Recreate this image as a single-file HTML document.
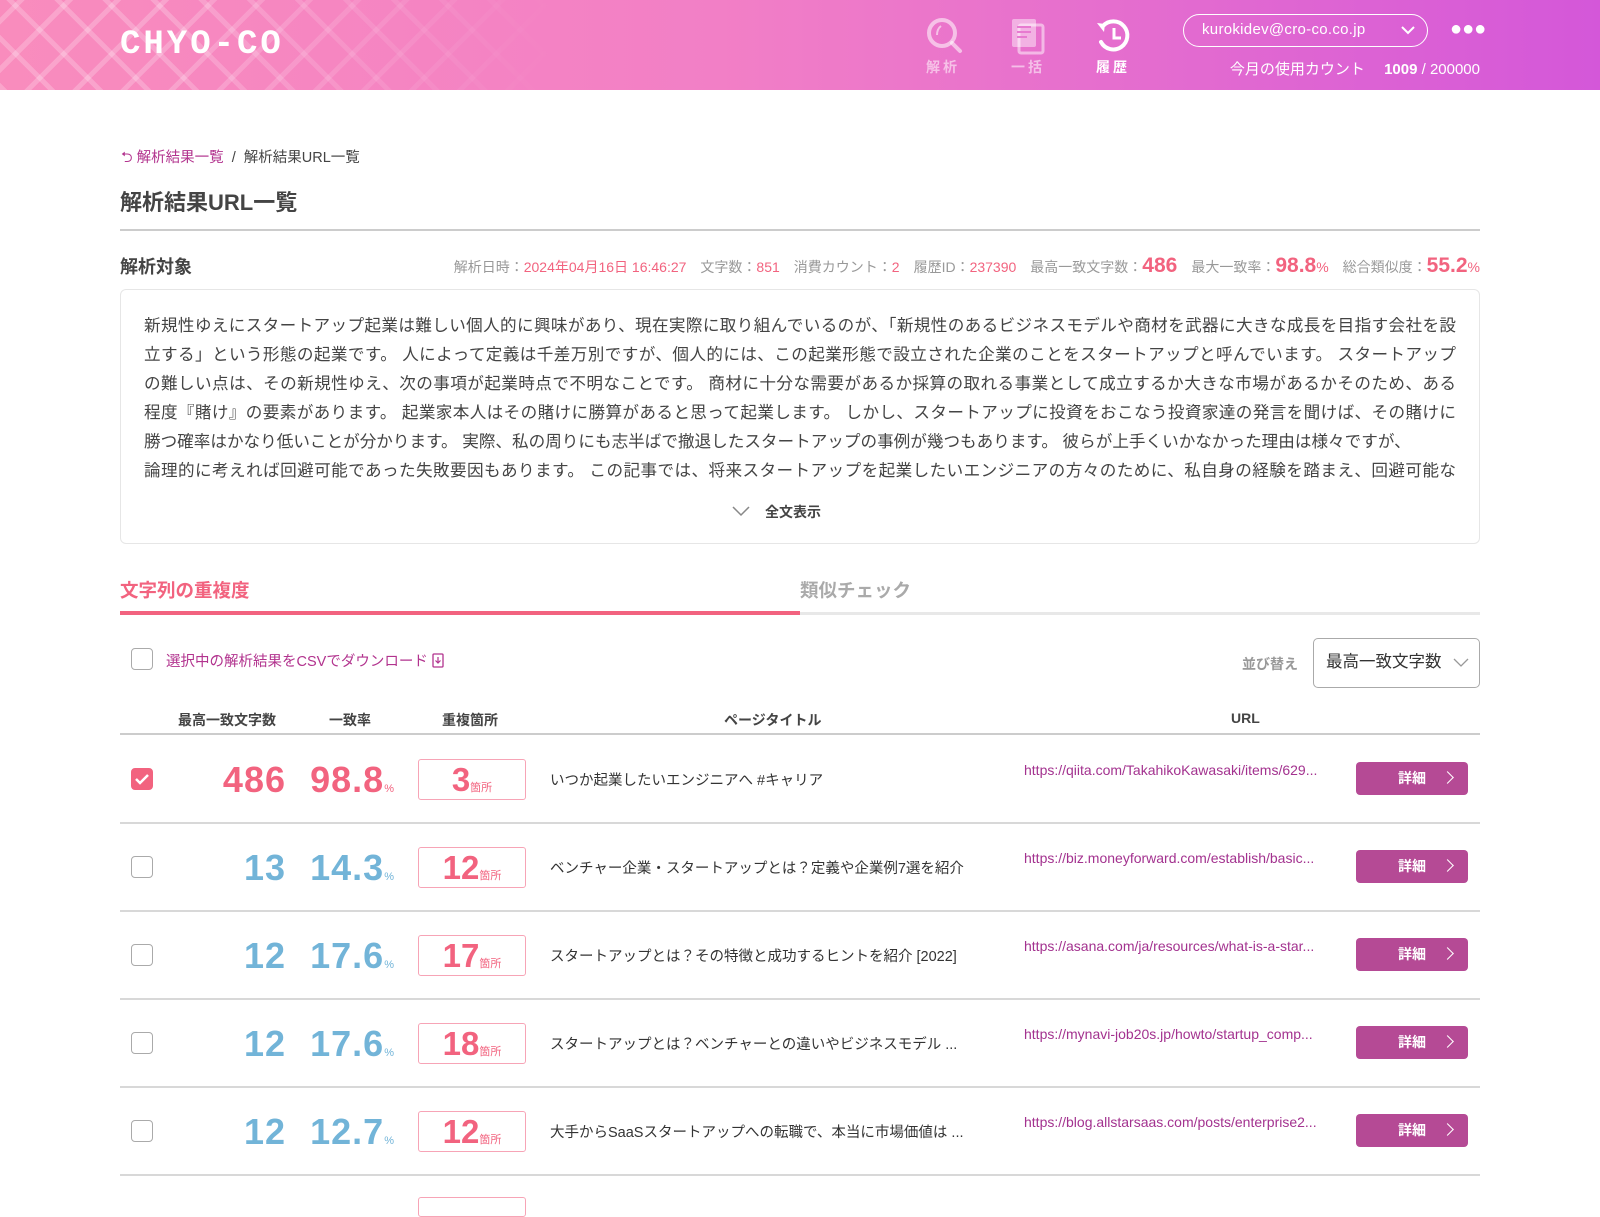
<!DOCTYPE html>
<html><head><meta charset="utf-8"><style>
*{box-sizing:border-box;margin:0;padding:0}
body{width:1600px;height:1200px;overflow:hidden;background:#fff;font-family:"Liberation Sans","Noto Sans CJK JP",sans-serif;color:#333;position:relative}
.abs{position:absolute}
.hdr{left:0;top:0;width:1600px;height:90px;background:linear-gradient(90deg,#f98cbd 0%,#f27fc6 45%,#e26ad0 75%,#d457d9 100%)}
.pat{left:0;top:0;width:560px;height:90px;background:repeating-linear-gradient(45deg,rgba(255,255,255,.22) 0 5px,transparent 5px 34px),repeating-linear-gradient(-45deg,rgba(255,255,255,.22) 0 5px,transparent 5px 34px);-webkit-mask-image:linear-gradient(90deg,#000 30%,transparent 100%);mask-image:linear-gradient(90deg,#000 30%,transparent 100%)}
.logo{left:120px;top:28px;color:#fff;font-family:"Liberation Mono",monospace;font-size:34px;letter-spacing:3px;line-height:34px;font-weight:bold}
.nav{color:rgba(255,255,255,.55);font-size:14px;font-weight:bold;letter-spacing:3px;text-align:center;width:60px}
.pill{left:1183px;top:14px;width:245px;height:33px;border:1.5px solid #fff;border-radius:17px;color:#fff;font-size:15px;line-height:30px;padding-left:18px;letter-spacing:.3px}
.num{font-weight:bold;text-align:right;letter-spacing:1px}
.pink{color:#f2637f}.blue{color:#72b4d8}
.box{border:1.5px solid #f7a4b6;border-radius:3px;width:108px;height:41px;left:418px;color:#f2637f;text-align:center}
.btn{left:1356px;width:112px;height:33px;background:#b54a95;border-radius:4px;color:#fff;font-weight:bold;font-size:14px;line-height:33px;padding-left:42px}
.btn:after{content:"";position:absolute;right:16px;top:11px;width:8px;height:8px;border-right:1.8px solid #fff;border-top:1.8px solid #fff;transform:rotate(45deg)}
.cb{left:131px;width:22px;height:22px;border:1.5px solid #aaa;border-radius:4px;background:#fff}
.sep{left:120px;width:1360px;height:1.5px;background:#d8d8d8}
.ttl{left:550px;font-size:14.5px;color:#333}
.url{left:1024px;font-size:14px;color:#a3328f}
.ln{white-space:nowrap;text-align-last:justify;width:1312px;font-size:16.6px;line-height:29px;color:#444;overflow:hidden;height:29px}
.big{font-size:36px}
</style></head><body>
<div class="abs hdr"></div><div class="abs pat"></div>
<div class="abs logo">CHYO-CO</div>
<svg class="abs" style="left:925px;top:16px" width="40" height="40" viewBox="0 0 40 40"><circle cx="17" cy="17" r="13" fill="none" stroke="rgba(255,255,255,.55)" stroke-width="4"/><path d="M12 19q0-6 4-9" stroke="rgba(255,255,255,.55)" stroke-width="2" fill="none"/><path d="M27 27l8 8" stroke="rgba(255,255,255,.55)" stroke-width="4" stroke-linecap="round"/></svg>
<svg class="abs" style="left:1010px;top:17px" width="38" height="38" viewBox="0 0 38 38"><rect x="2" y="2" width="24" height="28" rx="2" fill="rgba(255,255,255,.45)"/><rect x="9" y="8" width="24" height="28" rx="2" fill="none" stroke="rgba(255,255,255,.5)" stroke-width="3"/><path d="M7 10h14M7 15h14M7 20h10" stroke="#e77ad0" stroke-width="2"/></svg>
<svg class="abs" style="left:1094px;top:16px" width="40" height="40" viewBox="0 0 40 40"><path d="M9 10A14 14 0 1 1 7 26" fill="none" stroke="#fff" stroke-width="4" stroke-linecap="round"/><path d="M3 7l8 1-1 8z" fill="#fff"/><path d="M20 12v10h7" stroke="#fff" stroke-width="3" fill="none"/></svg>
<div class="abs nav" style="left:913px;top:57px">解析</div>
<div class="abs nav" style="left:998px;top:57px">一括</div>
<div class="abs nav" style="left:1083px;top:57px;color:#fff">履歴</div>
<div class="abs pill">kurokidev@cro-co.co.jp<svg style="position:absolute;right:12px;top:10px" width="14" height="10"><path d="M1 2l6 6 6-6" stroke="#fff" stroke-width="2" fill="none"/></svg></div>
<div class="abs" style="left:1450px;top:18px;color:#fff;font-size:20px;letter-spacing:0px">●●●</div>
<div class="abs" style="left:1200px;top:58px;color:#fff;font-size:15px;width:280px;text-align:right">今月の使用カウント　 <b>1009</b> / 200000</div>

<div class="abs" style="left:121px;top:146px;font-size:14.5px;color:#b2338e">⮌ 解析結果一覧 <span style="color:#444">&nbsp;/&nbsp; 解析結果URL一覧</span></div>
<div class="abs" style="left:120px;top:185px;font-size:22px;font-weight:bold;color:#444">解析結果URL一覧</div>
<div class="abs" style="left:120px;top:229px;width:1360px;height:1.5px;background:#ccc"></div>
<div class="abs" style="left:120px;top:253px;font-size:18px;font-weight:bold;color:#444">解析対象</div>
<div class="abs" style="left:380px;top:254px;width:1100px;text-align:right;font-size:14px;color:#999;white-space:nowrap">解析日時：<span class="pink">2024年04月16日 16:46:27</span>　文字数：<span class="pink">851</span>　消費カウント：<span class="pink">2</span>　履歴ID：<span class="pink">237390</span>　最高一致文字数：<b class="pink" style="font-size:21px">486</b>　最大一致率：<b class="pink" style="font-size:21px">98.8</b><span class="pink">%</span>　総合類似度：<b class="pink" style="font-size:21px">55.2</b><span class="pink">%</span></div>
<div class="abs" style="left:120px;top:289px;width:1360px;height:255px;border:1.5px solid #e6e6e6;border-radius:6px"></div>
<div class="abs" style="left:144px;top:311px">
<div class="ln">新規性ゆえにスタートアップ起業は難しい個人的に興味があり、現在実際に取り組んでいるのが、「新規性のあるビジネスモデルや商材を武器に大きな成長を目指す会社を設</div>
<div class="ln">立する」という形態の起業です。 人によって定義は千差万別ですが、個人的には、この起業形態で設立された企業のことをスタートアップと呼んでいます。 スタートアップ</div>
<div class="ln">の難しい点は、その新規性ゆえ、次の事項が起業時点で不明なことです。 商材に十分な需要があるか採算の取れる事業として成立するか大きな市場があるかそのため、ある</div>
<div class="ln">程度『賭け』の要素があります。 起業家本人はその賭けに勝算があると思って起業します。 しかし、スタートアップに投資をおこなう投資家達の発言を聞けば、その賭けに</div>
<div class="ln" style="text-align-last:left">勝つ確率はかなり低いことが分かります。 実際、私の周りにも志半ばで撤退したスタートアップの事例が幾つもあります。 彼らが上手くいかなかった理由は様々ですが、</div>
<div class="ln">論理的に考えれば回避可能であった失敗要因もあります。 この記事では、将来スタートアップを起業したいエンジニアの方々のために、私自身の経験を踏まえ、回避可能な</div>
</div>
<svg class="abs" style="left:732px;top:505px" width="18" height="12"><path d="M1 2l8 8 8-8" stroke="#888" stroke-width="1.5" fill="none"/></svg>
<div class="abs" style="left:765px;top:502px;font-size:14px;font-weight:bold;color:#444">全文表示</div>

<div class="abs" style="left:120px;top:577px;font-size:18.5px;font-weight:bold;color:#f2637f">文字列の重複度</div>
<div class="abs" style="left:800px;top:577px;font-size:18.5px;font-weight:bold;color:#aaa">類似チェック</div>
<div class="abs" style="left:120px;top:612px;width:1360px;height:3px;background:#e8e8e8"></div>
<div class="abs" style="left:120px;top:611px;width:680px;height:4px;background:#f2637f"></div>

<div class="abs cb" style="top:648px"></div>
<div class="abs" style="left:166px;top:650px;font-size:14.5px;color:#b2338e">選択中の解析結果をCSVでダウンロード <svg width="12" height="15" style="vertical-align:-2px"><rect x="1" y="1" width="10" height="13" rx="1" fill="none" stroke="#b2338e" stroke-width="1.3"/><path d="M6 4v6M3.5 7.5L6 10l2.5-2.5" stroke="#b2338e" stroke-width="1.2" fill="none"/></svg></div>
<div class="abs" style="left:1242px;top:654px;font-size:14px;font-weight:bold;color:#999">並び替え</div>
<div class="abs" style="left:1313px;top:638px;width:167px;height:50px;border:1.5px solid #aaa;border-radius:5px;font-size:16.5px;line-height:47px;padding-left:12px;color:#333">最高一致文字数<svg style="position:absolute;right:10px;top:19px" width="16" height="10"><path d="M1 1l7 7 7-7" stroke="#999" stroke-width="1.3" fill="none"/></svg></div>

<div class="abs" style="top:710px;left:178px;font-size:14px;font-weight:bold;color:#444">最高一致文字数</div>
<div class="abs" style="top:710px;left:329px;font-size:14px;font-weight:bold;color:#444">一致率</div>
<div class="abs" style="top:710px;left:442px;font-size:14px;font-weight:bold;color:#444">重複箇所</div>
<div class="abs" style="top:710px;left:724px;font-size:14px;font-weight:bold;color:#444">ページタイトル</div>
<div class="abs" style="top:710px;left:1231px;font-size:14px;font-weight:bold;color:#444">URL</div>
<div class="abs" style="left:120px;top:733px;width:1360px;height:2px;background:#ccc"></div>

<div class="abs cb" style="top:768px;background:#f2637f;border-color:#f2637f"><svg width="19" height="19" style="position:absolute;left:0;top:0"><path d="M4 10l4 4 8-8" stroke="#fff" stroke-width="2.5" fill="none"/></svg></div>
<div class="abs num pink big" style="top:759px;left:170px;width:116px">486</div>
<div class="abs num pink big" style="top:759px;left:290px;width:104px">98.8<span style="font-size:11px;font-weight:normal;letter-spacing:0">%</span></div>
<div class="abs box" style="top:759px"><b style="font-size:33px;line-height:40px">3</b><span style="font-size:11px">箇所</span></div>
<div class="abs ttl" style="top:769px">いつか起業したいエンジニアへ #キャリア</div>
<div class="abs url" style="top:762px">https://qiita.com/TakahikoKawasaki/items/629...</div>
<div class="abs btn" style="top:762px">詳細</div>
<div class="abs sep" style="top:822px"></div>

<div class="abs cb" style="top:856px"></div>
<div class="abs num blue big" style="top:847px;left:170px;width:116px">13</div>
<div class="abs num blue big" style="top:847px;left:290px;width:104px">14.3<span style="font-size:11px;font-weight:normal;letter-spacing:0">%</span></div>
<div class="abs box" style="top:847px"><b style="font-size:33px;line-height:40px">12</b><span style="font-size:11px">箇所</span></div>
<div class="abs ttl" style="top:857px">ベンチャー企業・スタートアップとは？定義や企業例7選を紹介</div>
<div class="abs url" style="top:850px">https://biz.moneyforward.com/establish/basic...</div>
<div class="abs btn" style="top:850px">詳細</div>
<div class="abs sep" style="top:910px"></div>

<div class="abs cb" style="top:944px"></div>
<div class="abs num blue big" style="top:935px;left:170px;width:116px">12</div>
<div class="abs num blue big" style="top:935px;left:290px;width:104px">17.6<span style="font-size:11px;font-weight:normal;letter-spacing:0">%</span></div>
<div class="abs box" style="top:935px"><b style="font-size:33px;line-height:40px">17</b><span style="font-size:11px">箇所</span></div>
<div class="abs ttl" style="top:945px">スタートアップとは？その特徴と成功するヒントを紹介 [2022]</div>
<div class="abs url" style="top:938px">https://asana.com/ja/resources/what-is-a-star...</div>
<div class="abs btn" style="top:938px">詳細</div>
<div class="abs sep" style="top:998px"></div>

<div class="abs cb" style="top:1032px"></div>
<div class="abs num blue big" style="top:1023px;left:170px;width:116px">12</div>
<div class="abs num blue big" style="top:1023px;left:290px;width:104px">17.6<span style="font-size:11px;font-weight:normal;letter-spacing:0">%</span></div>
<div class="abs box" style="top:1023px"><b style="font-size:33px;line-height:40px">18</b><span style="font-size:11px">箇所</span></div>
<div class="abs ttl" style="top:1033px">スタートアップとは？ベンチャーとの違いやビジネスモデル ...</div>
<div class="abs url" style="top:1026px">https://mynavi-job20s.jp/howto/startup_comp...</div>
<div class="abs btn" style="top:1026px">詳細</div>
<div class="abs sep" style="top:1086px"></div>

<div class="abs cb" style="top:1120px"></div>
<div class="abs num blue big" style="top:1111px;left:170px;width:116px">12</div>
<div class="abs num blue big" style="top:1111px;left:290px;width:104px">12.7<span style="font-size:11px;font-weight:normal;letter-spacing:0">%</span></div>
<div class="abs box" style="top:1111px"><b style="font-size:33px;line-height:40px">12</b><span style="font-size:11px">箇所</span></div>
<div class="abs ttl" style="top:1121px">大手からSaaSスタートアップへの転職で、本当に市場価値は ...</div>
<div class="abs url" style="top:1114px">https://blog.allstarsaas.com/posts/enterprise2...</div>
<div class="abs btn" style="top:1114px">詳細</div>
<div class="abs sep" style="top:1174px"></div>
<div class="abs box" style="top:1197px;height:20px"></div>
</body></html>
